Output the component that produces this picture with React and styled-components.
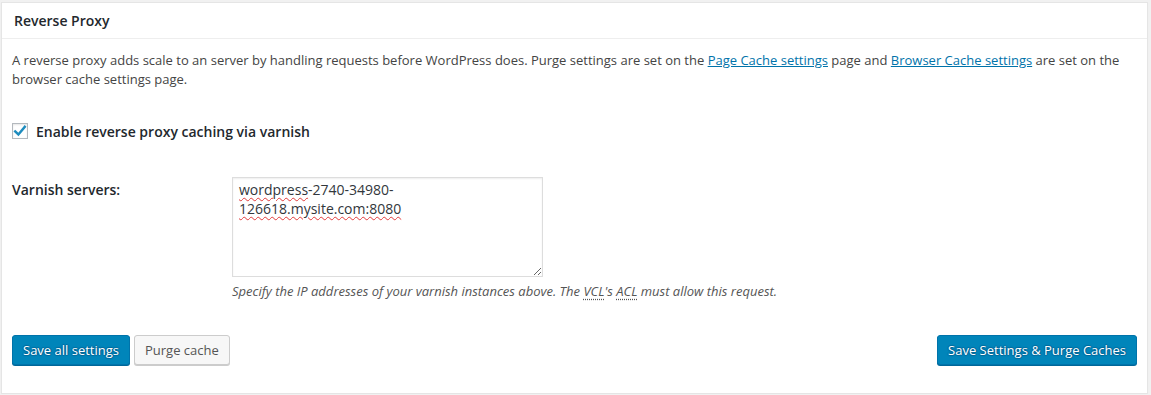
import React from "react"
import styled, { createGlobalStyle } from "styled-components"

const GlobalStyle = createGlobalStyle`
  html, body {
    margin: 0;
    padding: 0;
    background: #f1f1f1;
    font-family: "Open Sans", "Liberation Sans", sans-serif;
    font-size: 13px;
    color: #444;
  }
`

export default function App() {
  return (
    <>
      <GlobalStyle />
      <Postbox>
        <Header>Reverse Proxy</Header>
        <Inside>
          <Intro>
            A reverse proxy adds scale to an server by handling requests before
            WordPress does. Purge settings are set on the{" "}
            <Link href="#">Page Cache settings</Link> page and{" "}
            <Link href="#">Browser Cache settings</Link> are set on the browser
            cache settings page.
          </Intro>
          <CheckRow>
            <Check>
              <svg width="16" height="16" viewBox="0 0 16 16">
                <path
                  d="M3.2 8.4 L6.4 11.4 L12.8 3.8"
                  fill="none"
                  stroke="#1e8cbe"
                  strokeWidth="2.4"
                  strokeLinecap="square"
                />
              </svg>
            </Check>
            <CheckLabel>Enable reverse proxy caching via varnish</CheckLabel>
          </CheckRow>
          <FormTable>
            <FieldLabel>Varnish servers:</FieldLabel>
            <Field>
              <TextBox role="textbox">
                <Misspelt>wordpress</Misspelt>-2740-34980-
                <br />
                <Misspelt>126618.mysite.com:8080</Misspelt>
              </TextBox>
              <Description>
                Specify the IP addresses of your varnish instances above. The{" "}
                <Abbr>VCL</Abbr>'s <Abbr>ACL</Abbr> must allow this request.
              </Description>
            </Field>
          </FormTable>
          <Actions>
            <Group>
              <Button $primary>Save all settings</Button>
              <Button>Purge cache</Button>
            </Group>
            <Button $primary>Save Settings &amp; Purge Caches</Button>
          </Actions>
        </Inside>
      </Postbox>
    </>
  )
}

const Postbox = styled.div`
  margin: 2px 0 0 1px;
  width: 1147px;
  height: 392px;
  box-sizing: border-box;
  background: #fff;
  border: 1px solid #e5e5e5;
  box-shadow: 0 1px 1px rgba(0, 0, 0, 0.04);
`

const Header = styled.h3`
  margin: 0;
  padding: 8px 12px;
  font-size: 14px;
  font-weight: 600;
  line-height: 19px;
  color: #23282d;
  border-bottom: 1px solid #eee;
`

const Inside = styled.div`
  padding: 0 10px 12px 10px;
`

const Intro = styled.p`
  margin: 12px 0 0;
  line-height: 19px;
  color: #444;
`

const Link = styled.a`
  color: #0073aa;
  text-decoration: underline;
`

const CheckRow = styled.label`
  display: flex;
  align-items: center;
  margin-top: 32px;
  height: 20px;
`

const Check = styled.span`
  display: inline-flex;
  width: 16px;
  height: 16px;
  box-sizing: border-box;
  border: 1px solid #b4b9be;
  background: #fff;
  box-shadow: inset 0 1px 2px rgba(0, 0, 0, 0.1);
  align-items: center;
  justify-content: center;
  svg {
    margin: -1px;
  }
`

const CheckLabel = styled.span`
  margin-left: 8px;
  font-size: 14px;
  font-weight: 600;
  color: #23282d;
`

const FormTable = styled.div`
  display: grid;
  grid-template-columns: 210px 1fr;
  margin-top: 36px;
`

const FieldLabel = styled.div`
  padding-top: 3px;
  font-size: 14px;
  font-weight: 600;
  color: #23282d;
  line-height: 20px;
`

const Field = styled.div`
  padding-left: 10px;
`

const TextBox = styled.div`
  width: 311px;
  height: 100px;
  box-sizing: border-box;
  padding: 2px 6px;
  border: 1px solid #ddd;
  box-shadow: inset 0 1px 2px rgba(0, 0, 0, 0.07);
  font-size: 14px;
  line-height: 19px;
  color: #32373c;
  overflow: auto;
  resize: both;
`

const Misspelt = styled.span`
  text-decoration: underline wavy #e23b3b;
  text-decoration-thickness: 1px;
  text-underline-offset: 2px;
`

const Description = styled.p`
  margin: 5px 0 0;
  font-style: italic;
  font-size: 13px;
  line-height: 19px;
  color: #555;
`

const Abbr = styled.abbr`
  text-decoration: underline dotted;
  text-underline-offset: 3px;
`

const Actions = styled.div`
  display: flex;
  justify-content: space-between;
  margin-top: 34px;
`

const Group = styled.div`
  display: flex;
  gap: 4px;
`

const Button = styled.button`
  height: 30px;
  padding: 0 10px 2px;
  font-family: "Open Sans", "Liberation Sans", sans-serif;
  font-size: 13px;
  line-height: 28px;
  border-radius: 3px;
  border: 1px solid ${(p) => (p.$primary ? "#0073aa" : "#ccc")};
  background: ${(p) => (p.$primary ? "#0085ba" : "#f7f7f7")};
  color: ${(p) => (p.$primary ? "#fff" : "#555")};
  box-shadow: ${(p) => (p.$primary ? "0 1px 0 #006799" : "0 1px 0 #ccc")};
  text-shadow: ${(p) =>
    p.$primary ? "0 -1px 1px #006799, 1px 0 1px #006799, 0 1px 1px #006799, -1px 0 1px #006799" : "none"};
`
